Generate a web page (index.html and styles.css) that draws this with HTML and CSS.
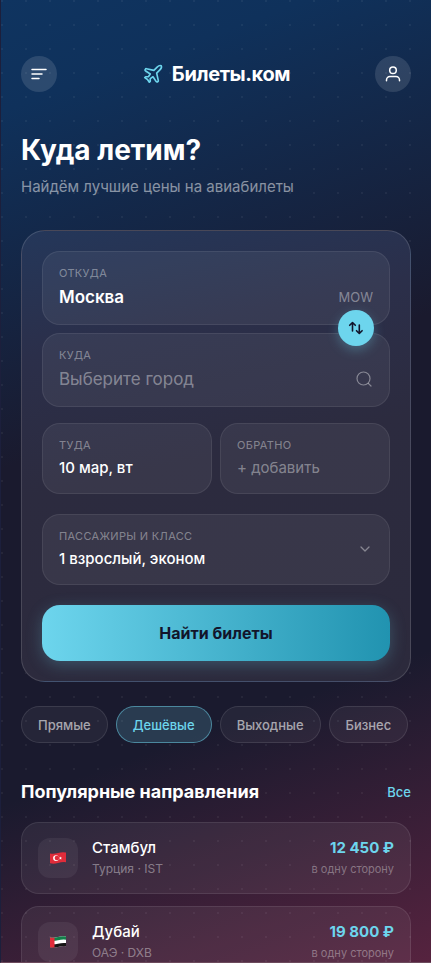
FILE: index.html
```html
<!DOCTYPE html>
<html lang="ru">
<head>
<meta charset="utf-8">
<meta name="viewport" content="width=device-width, initial-scale=1">
<title>Билеты.ком</title>
<link rel="stylesheet" href="styles.css">
</head>
<body>
<div class="app">
  <header class="topbar">
    <button class="round-btn" type="button" aria-label="Меню">
      <svg width="20" height="20" viewBox="0 0 20 20" fill="none" stroke="currentColor" stroke-width="1.5" stroke-linecap="round"><path d="M3 5.5h14M3 10h10M3 14.5h7"/></svg>
    </button>
    <a class="brand" href="#">
      <svg width="22" height="22" viewBox="0 0 24 24" fill="none" stroke="currentColor" stroke-width="1.8" stroke-linecap="round" stroke-linejoin="round"><path d="M17.8 19.2 16 11l3.500-3.500C21 6 21.500 4 21 3c-1-.5-3 0-4.500 1.500L13 8 4.800 6.200c-.5-.1-.9.1-1.100.5l-.3.5c-.2.5-.1 1 .3 1.300L9 12l-2 3H4l-1 1 3 2 2 3 1-1v-3l3-2 3.500 5.300c.3.4.8.5 1.300.3l.5-.2c.4-.3.6-.7.5-1.200z"/></svg>
      <span>Билеты.ком</span>
    </a>
    <button class="round-btn" type="button" aria-label="Профиль">
      <svg width="20" height="20" viewBox="0 0 20 20" fill="none" stroke="currentColor" stroke-width="1.5" stroke-linecap="round"><circle cx="10" cy="6.300" r="3.300"/><path d="M3.500 16.700v-.7a3.500 3.500 0 0 1 3.500-3.500h6a3.500 3.500 0 0 1 3.500 3.500v.7"/></svg>
    </button>
  </header>

  <main>
    <section class="intro">
      <h1>Куда летим?</h1>
      <p>Найдём лучшие цены на авиабилеты</p>
    </section>

    <form class="search">
      <div class="route">
        <div class="field city">
          <label for="from">Откуда</label>
          <div class="line">
            <input id="from" type="text" value="Москва">
            <span class="code">MOW</span>
          </div>
        </div>
        <button class="swap" type="button" aria-label="Поменять местами">
          <svg width="16" height="16" viewBox="0 0 16 16" fill="none" stroke="currentColor" stroke-width="1.600" stroke-linecap="round" stroke-linejoin="round"><path d="M4.500 11V2.700M1.700 5.300l2.800-2.800 2.800 2.800M11.300 5v8.300M8.500 10.700l2.800 2.800 2.800-2.800"/></svg>
        </button>
        <div class="field city">
          <label for="to">Куда</label>
          <div class="line">
            <input id="to" type="text" placeholder="Выберите город">
            <svg class="hint" width="18" height="18" viewBox="0 0 18 18" fill="none" stroke="currentColor" stroke-width="1.200" stroke-linecap="round"><circle cx="8.500" cy="8.500" r="6.500"/><path d="m13.300 13.300 2.700 2.700"/></svg>
          </div>
        </div>
      </div>
      <div class="dates">
        <div class="field">
          <label for="depart">Туда</label>
          <input id="depart" type="text" value="10 мар, вт">
        </div>
        <div class="field">
          <label for="return">Обратно</label>
          <input id="return" type="text" placeholder="+ добавить">
        </div>
      </div>
      <div class="field pax">
        <div class="pax-main">
          <label for="pax">Пассажиры и класс</label>
          <select id="pax"><option>1 взрослый, эконом</option></select>
        </div>
        <svg class="hint" width="16" height="16" viewBox="0 0 16 16" fill="none" stroke="currentColor" stroke-width="1.300" stroke-linecap="round" stroke-linejoin="round"><path d="m4 6 4 4 4-4"/></svg>
      </div>
      <button class="submit" type="submit">Найти билеты</button>
    </form>

    <div class="chips">
      <button class="chip" type="button">Прямые</button>
      <button class="chip active" type="button">Дешёвые</button>
      <button class="chip" type="button">Выходные</button>
      <button class="chip" type="button">Бизнес</button>
    </div>

    <section>
      <div class="section-head">
        <h2>Популярные направления</h2>
        <a href="#">Все</a>
      </div>
      <ul class="places">
        <li class="place">
          <span class="flag"><svg width="18" height="14" viewBox="0 0 18 14"><path fill="#e02c3a" d="M1 2.500Q5 3.300 9 2T17 1.500V11.200Q13 10.800 9 12T1 12.300Z"/><circle cx="7" cy="7.100" r="2.900" fill="#fff"/><circle cx="7.900" cy="7" r="2.300" fill="#e02c3a"/><path fill="#fff" d="m11.500 5.500.4 1.100 1.100.1-.9.700.3 1.100-.9-.6-1 .6.300-1.100-.9-.7 1.200-.1z"/></svg></span>
          <div class="info"><strong>Стамбул</strong><span>Турция · IST</span></div>
          <div class="price"><strong>12 450 ₽</strong><span>в одну сторону</span></div>
        </li>
        <li class="place">
          <span class="flag"><svg width="18" height="14" viewBox="0 0 18 14"><path fill="#fff" d="M1 2.500Q5 3.300 9 2T17 1.500V11.200Q13 10.800 9 12T1 12.300Z"/><path fill="#12804a" d="M1 2.500Q5 3.300 9 2T17 1.500V4.700Q13 4.300 9 5.300T1 5.800Z"/><path fill="#151515" d="M1 9.100Q5 9.800 9 8.700T17 8V11.200Q13 10.800 9 12T1 12.300Z"/><path fill="#e02c3a" d="M1 2.500Q3 2.900 5.500 2.700V12.500Q3 12.700 1 12.300Z"/></svg></span>
          <div class="info"><strong>Дубай</strong><span>ОАЭ · DXB</span></div>
          <div class="price"><strong>19 800 ₽</strong><span>в одну сторону</span></div>
        </li>
      </ul>
    </section>
  </main>
</div>
</body>
</html>
```
FILE: styles.css
```css
* {
  box-sizing: border-box;
}

:root {
  --cyan: #6dd5ed;
  --muted: rgba(255, 255, 255, 0.5);
  --faint: rgba(255, 255, 255, 0.4);
  --line: rgba(255, 255, 255, 0.14);
}

body {
  margin: 0;
  background: #1a1a2e;
  color: #fff;
  font-family: Inter, "Noto Sans", sans-serif;
}

h1, h2, p, ul {
  margin: 0;
  padding: 0;
}

button, input, select {
  font: inherit;
  color: inherit;
  margin: 0;
  padding: 0;
  border: 0;
  background: none;
  outline: 0;
}

button {
  cursor: pointer;
}

a {
  color: inherit;
  text-decoration: none;
}

svg {
  display: block;
  flex: none;
}

.app {
  height: 100vh;
  overflow-y: auto;
  scrollbar-width: none;
  padding: 56px 20px 24px;
  border-left: 1px solid #1c1f3c;
  border-bottom: 1px solid #6c4a5c;
  background:
    radial-gradient(circle at 1px 1px, rgba(255, 255, 255, 0.05) 1px, transparent 1px) 0 0 / 24px 24px,
    linear-gradient(160deg, #0f3460 0%, #0f315b 10%, #1a1a2e 42%, #1a1a2e 72%, #56233f 100%);
}

.topbar {
  display: flex;
  align-items: center;
  justify-content: space-between;
}

.round-btn {
  width: 36px;
  height: 36px;
  display: grid;
  place-items: center;
  border-radius: 50%;
  background: rgba(255, 255, 255, 0.12);
}

.brand {
  display: flex;
  align-items: center;
  gap: 8px;
  font-size: 20px;
  line-height: 24px;
  font-weight: 700;
  letter-spacing: -0.02em;
}

.brand svg {
  color: var(--cyan);
}

.intro {
  margin-top: 41px;
}

.intro h1 {
  font-size: 28px;
  line-height: 34px;
  font-weight: 700;
}

.intro p {
  margin-top: 10px;
  font-size: 15px;
  line-height: 20px;
  color: var(--muted);
}

.search {
  display: flex;
  flex-direction: column;
  margin-top: 33px;
  padding: 20px;
  border: 1px solid var(--line);
  border-radius: 24px;
  background: linear-gradient(168deg, #24375a 0%, #2b2f4a 24%, #2c2b3f 50%, #2c2a3c 100%);
}

.route {
  position: relative;
  display: grid;
  gap: 8px;
}

.field {
  min-width: 0;
  padding: 14px 16px 16px;
  border: 1px solid rgba(255, 255, 255, 0.08);
  border-radius: 18px;
  background: rgba(255, 255, 255, 0.06);
}

.field label {
  display: block;
  font-size: 11px;
  line-height: 14px;
  letter-spacing: 0.03em;
  text-transform: uppercase;
  color: var(--faint);
}

.field input,
.field select {
  display: block;
  width: 100%;
  min-width: 0;
  height: 20px;
  margin-top: 5px;
  font-size: 15px;
  font-weight: 500;
  appearance: none;
}

.field ::placeholder {
  color: var(--faint);
  opacity: 1;
}

.line {
  display: flex;
  align-items: center;
  gap: 8px;
  margin-top: 6px;
}

.city .line input {
  flex: 1;
  height: 22px;
  margin: 0;
  font-size: 17px;
}

#from {
  font-weight: 600;
}

#to {
  font-weight: 400;
}

#return {
  font-weight: 400;
}

.code {
  font-size: 13px;
  color: var(--faint);
}

.hint {
  color: var(--faint);
}

.swap {
  position: absolute;
  right: 16px;
  top: 50%;
  width: 36px;
  height: 36px;
  margin-top: -19px;
  display: grid;
  place-items: center;
  border-radius: 50%;
  background: var(--cyan);
  color: #12152b;
  box-shadow: 0 4px 12px rgba(109, 213, 237, 0.3);
}

.dates {
  display: grid;
  grid-template-columns: 1fr 1fr;
  gap: 8px;
  margin-top: 16px;
}

.pax {
  display: flex;
  align-items: center;
  margin-top: 20px;
}

.pax-main {
  flex: 1;
  min-width: 0;
}

.submit {
  height: 56px;
  margin-top: 20px;
  border-radius: 18px;
  background: linear-gradient(90deg, #6dd5ed, #2193b0);
  color: #12152b;
  font-size: 16px;
  font-weight: 700;
  box-shadow: 0 4px 16px rgba(109, 213, 237, 0.25);
}

.chips {
  display: flex;
  gap: 8px;
  margin: 24px -20px 0 0;
  overflow: hidden;
}

.chip {
  height: 37px;
  padding: 0 16px;
  flex: none;
  border: 1px solid rgba(255, 255, 255, 0.1);
  border-radius: 19px;
  background: rgba(255, 255, 255, 0.05);
  font-size: 13px;
  font-weight: 500;
  color: rgba(255, 255, 255, 0.6);
}

.chip.active {
  border-color: rgba(109, 213, 237, 0.5);
  background: rgba(109, 213, 237, 0.18);
  color: var(--cyan);
}

.section-head {
  display: flex;
  align-items: center;
  justify-content: space-between;
  margin-top: 37px;
}

.section-head h2 {
  font-size: 18px;
  line-height: 24px;
  font-weight: 700;
}

.section-head a {
  font-size: 13px;
  font-weight: 500;
  color: var(--cyan);
}

.places {
  display: grid;
  gap: 12px;
  margin-top: 18px;
  list-style: none;
}

.place {
  display: flex;
  align-items: center;
  gap: 14px;
  height: 72px;
  padding: 0 16px;
  border: 1px solid rgba(255, 255, 255, 0.09);
  border-radius: 18px;
  background: rgba(255, 255, 255, 0.06);
}

.flag {
  width: 40px;
  height: 40px;
  display: grid;
  place-items: center;
  border-radius: 12px;
  background: rgba(255, 255, 255, 0.06);
}

.info,
.price {
  display: grid;
  gap: 2px;
}

.info {
  flex: 1;
}

.price {
  text-align: right;
}

.place strong {
  font-size: 15px;
  line-height: 20px;
  font-weight: 500;
}

.place div span {
  font-size: 12px;
  line-height: 18px;
  color: var(--faint);
}

.place .price strong {
  font-weight: 700;
  color: var(--cyan);
}

.place .price span {
  font-size: 11px;
  color: rgba(255, 255, 255, 0.35);
}
```
